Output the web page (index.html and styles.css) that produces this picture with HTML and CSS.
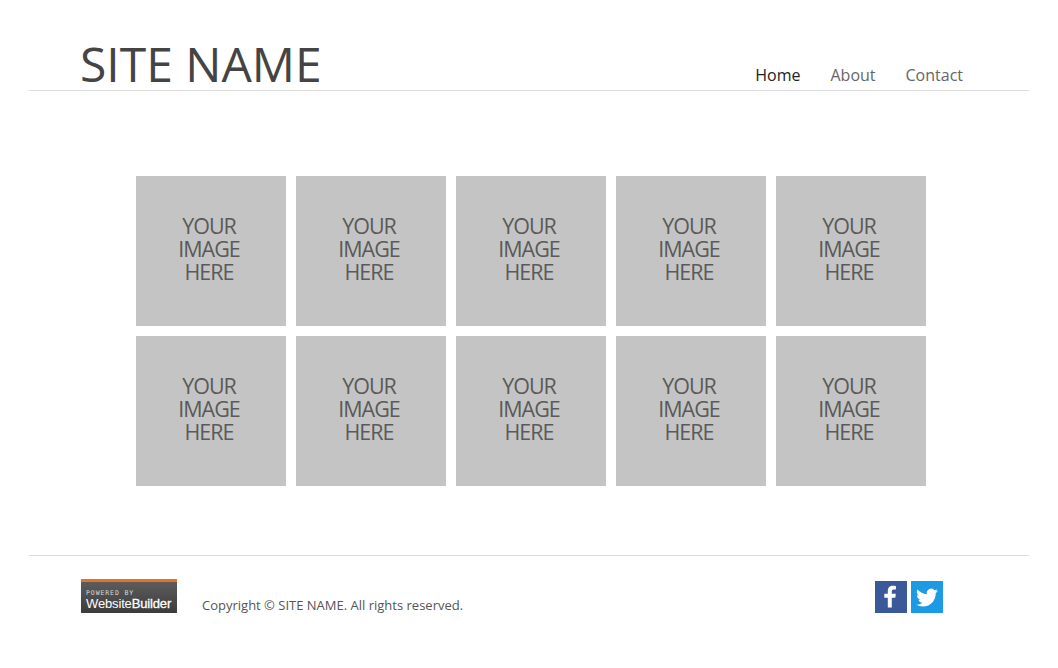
FILE: index.html
```html
<!DOCTYPE html>
<html lang="en">
<head>
<meta charset="utf-8">
<title>SITE NAME</title>
<link rel="stylesheet" href="styles.css">
</head>
<body>
<div class="page">
  <header class="site-header">
    <h1 class="site-name">SITE NAME</h1>
    <nav class="nav">
      <a class="nav-link active" href="#">Home</a>
      <a class="nav-link" href="#">About</a>
      <a class="nav-link" href="#">Contact</a>
    </nav>
  </header>
  <main class="gallery">
    <div class="tile"><div class="line">YOUR</div><div class="line">IMAGE</div><div class="line">HERE</div></div>
    <div class="tile"><div class="line">YOUR</div><div class="line">IMAGE</div><div class="line">HERE</div></div>
    <div class="tile"><div class="line">YOUR</div><div class="line">IMAGE</div><div class="line">HERE</div></div>
    <div class="tile"><div class="line">YOUR</div><div class="line">IMAGE</div><div class="line">HERE</div></div>
    <div class="tile"><div class="line">YOUR</div><div class="line">IMAGE</div><div class="line">HERE</div></div>
    <div class="tile"><div class="line">YOUR</div><div class="line">IMAGE</div><div class="line">HERE</div></div>
    <div class="tile"><div class="line">YOUR</div><div class="line">IMAGE</div><div class="line">HERE</div></div>
    <div class="tile"><div class="line">YOUR</div><div class="line">IMAGE</div><div class="line">HERE</div></div>
    <div class="tile"><div class="line">YOUR</div><div class="line">IMAGE</div><div class="line">HERE</div></div>
    <div class="tile"><div class="line">YOUR</div><div class="line">IMAGE</div><div class="line">HERE</div></div>
  </main>
  <footer class="site-footer">
    <div class="footer-left">
      <div class="badge">
        <div class="badge-small">POWERED BY</div>
        <div class="badge-big">Website<b>Builder</b></div>
      </div>
      <p class="copyright">Copyright © SITE NAME. All rights reserved.</p>
    </div>
    <div class="social">
      <a class="social-icon fb" href="#" aria-label="Facebook">
        <svg viewBox="1 0.5 32 32" width="32" height="32"><path fill="#fff" d="M17.800 27V17.200h3.500l.5-3.900h-4v-2.400c0-1.100.4-1.900 2-1.900h2.100V5.400c-.4 0-1.600-.2-3-.2-3 0-5.100 1.800-5.100 5.200v2.900h-3.500v3.900h3.500V27z"/></svg>
      </a>
      <a class="social-icon tw" href="#" aria-label="Twitter">
        <svg viewBox="-1.500 -2.200 35 35" width="32" height="32"><path fill="#fff" d="M28 8.600c-.9.4-1.800.7-2.800.8 1-.6 1.800-1.600 2.200-2.700-1 .6-2 1-3.100 1.200a4.900 4.900 0 0 0-8.400 4.500C11.800 12.200 8.200 10.200 5.700 7.200a4.900 4.900 0 0 0 1.500 6.600c-.8 0-1.600-.2-2.200-.6v.1c0 2.400 1.700 4.400 3.900 4.800-.7.2-1.500.2-2.200.1.600 2 2.400 3.400 4.600 3.400A9.900 9.900 0 0 1 4 23.600a13.900 13.900 0 0 0 7.500 2.200c9 0 14-7.500 14-14v-.6c1-.7 1.800-1.600 2.500-2.600z"/></svg>
      </a>
    </div>
  </footer>
</div>
</body>
</html>
```
FILE: styles.css
```css
* { box-sizing: border-box; }
html, body { margin: 0; padding: 0; background: #fff; }
body { font-family: "Open Sans", "Liberation Sans", sans-serif; color: #555; }
.page { width: 1000px; margin: 0 auto; }

.site-header {
  height: 91px;
  border-bottom: 1px solid #dcdcdc;
  padding: 0 66px 0 51px;
  display: flex;
  justify-content: space-between;
  align-items: flex-end;
}
.site-name {
  margin: 0;
  font-size: 48px;
  font-weight: 400;
  line-height: 62px;
  color: #444;
  position: relative;
  top: 5px;
}
.nav { display: flex; gap: 30px; padding-bottom: 4px; }
.nav-link { font-size: 16px; line-height: 22px; color: #666; text-decoration: none; }
.nav-link.active { color: #222; }

.gallery {
  display: grid;
  grid-template-columns: repeat(5, 150px);
  grid-auto-rows: 150px;
  gap: 10px;
  padding: 85px 0 0 107px;
  height: 465px;
  border-bottom: 1px solid #dcdcdc;
}
.tile {
  background: #c4c4c4;
  color: #5a5a5a;
  font-size: 21.5px;
  letter-spacing: -1px;
  text-align: center;
  padding: 38px 4px 0 0;
}
.line { height: 23px; line-height: 23px; }

.site-footer {
  display: flex;
  justify-content: space-between;
  padding: 23px 86px 0 52px;
}
.footer-left { display: flex; align-items: flex-end; gap: 25px; height: 35px; }
.badge {
  width: 96px;
  height: 34px;
  margin-top: 1px;
  margin-bottom: 1px;
  border-top: 3px solid #e8731f;
  background: linear-gradient(#5c5c5c, #3c3c3c);
  color: #fff;
  padding: 8px 0 0 5px;
}
.badge-small { font-size: 6.500px; line-height: 7px; letter-spacing: 0.9px; color: #d8d8d8; font-family: "DejaVu Sans Mono", monospace; }
.badge-big { font-size: 13px; line-height: 14px; letter-spacing: -0.15px; font-family: "Liberation Sans", sans-serif; white-space: nowrap; }
.badge-big b { font-weight: 400; -webkit-text-stroke: 0.3px #fff; }
.copyright { margin: 0; font-size: 13px; line-height: 18px; color: #555; white-space: nowrap; }

.social { display: flex; gap: 4px; padding-top: 2px; }
.social-icon { display: block; width: 32px; height: 32px; }
.social-icon svg { display: block; }
.fb { background: #3b5998; }
.tw { background: #1d9ae6; }
```
